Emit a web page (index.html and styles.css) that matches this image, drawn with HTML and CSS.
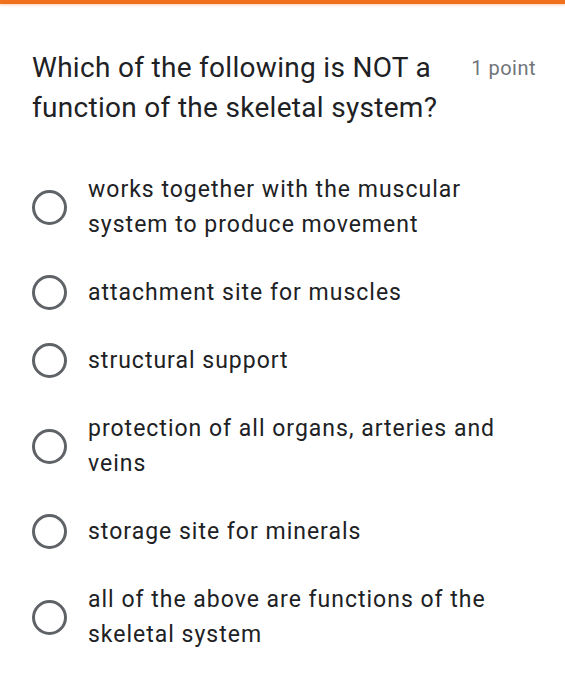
FILE: index.html
```html
<!DOCTYPE html>
<html>
<head>
<meta charset="utf-8">
<link rel="stylesheet" href="styles.css">
</head>
<body>
<div class="topbar"></div>
<div class="card">
  <div class="header">
    <div class="question">Which of the following is NOT a function of the skeletal system?</div>
    <div class="points">1 point</div>
  </div>
  <div class="options">
    <div class="option"><span class="radio"></span><span class="label">works together with the muscular system to produce movement</span></div>
    <div class="option"><span class="radio"></span><span class="label">attachment site for muscles</span></div>
    <div class="option"><span class="radio"></span><span class="label">structural support</span></div>
    <div class="option"><span class="radio"></span><span class="label">protection of all organs, arteries and veins</span></div>
    <div class="option"><span class="radio"></span><span class="label">storage site for minerals</span></div>
    <div class="option"><span class="radio"></span><span class="label">all of the above are functions of the skeletal system</span></div>
  </div>
</div>
</body>
</html>
```
FILE: styles.css
```css
html, body {
  margin: 0;
  padding: 0;
  background: #ffffff;
}
body {
  font-family: Roboto, "Liberation Sans", sans-serif;
  color: #202124;
}
.topbar {
  height: 4px;
  background: #f0701b;
  box-shadow: 0 1px 3px rgba(240, 112, 27, 0.35);
}
.card {
  padding: 44px 29px 0 32px;
}
.header {
  display: flex;
  align-items: flex-start;
  justify-content: space-between;
}
.question {
  font-size: 28px;
  line-height: 40px;
  letter-spacing: 0.3px;
  width: 420px;
}
.points {
  font-size: 20px;
  line-height: 40px;
  letter-spacing: 0.5px;
  color: #70757a;
  white-space: nowrap;
}
.options {
  margin-top: 44px;
  display: flex;
  flex-direction: column;
  gap: 33px;
}
.option {
  display: flex;
  align-items: center;
}
.radio {
  flex: none;
  width: 29px;
  height: 29px;
  border: 3px solid #5f6368;
  border-radius: 50%;
  margin-right: 21px;
}
.label {
  font-size: 23px;
  line-height: 35px;
  letter-spacing: 1px;
  width: 445px;
}
```
